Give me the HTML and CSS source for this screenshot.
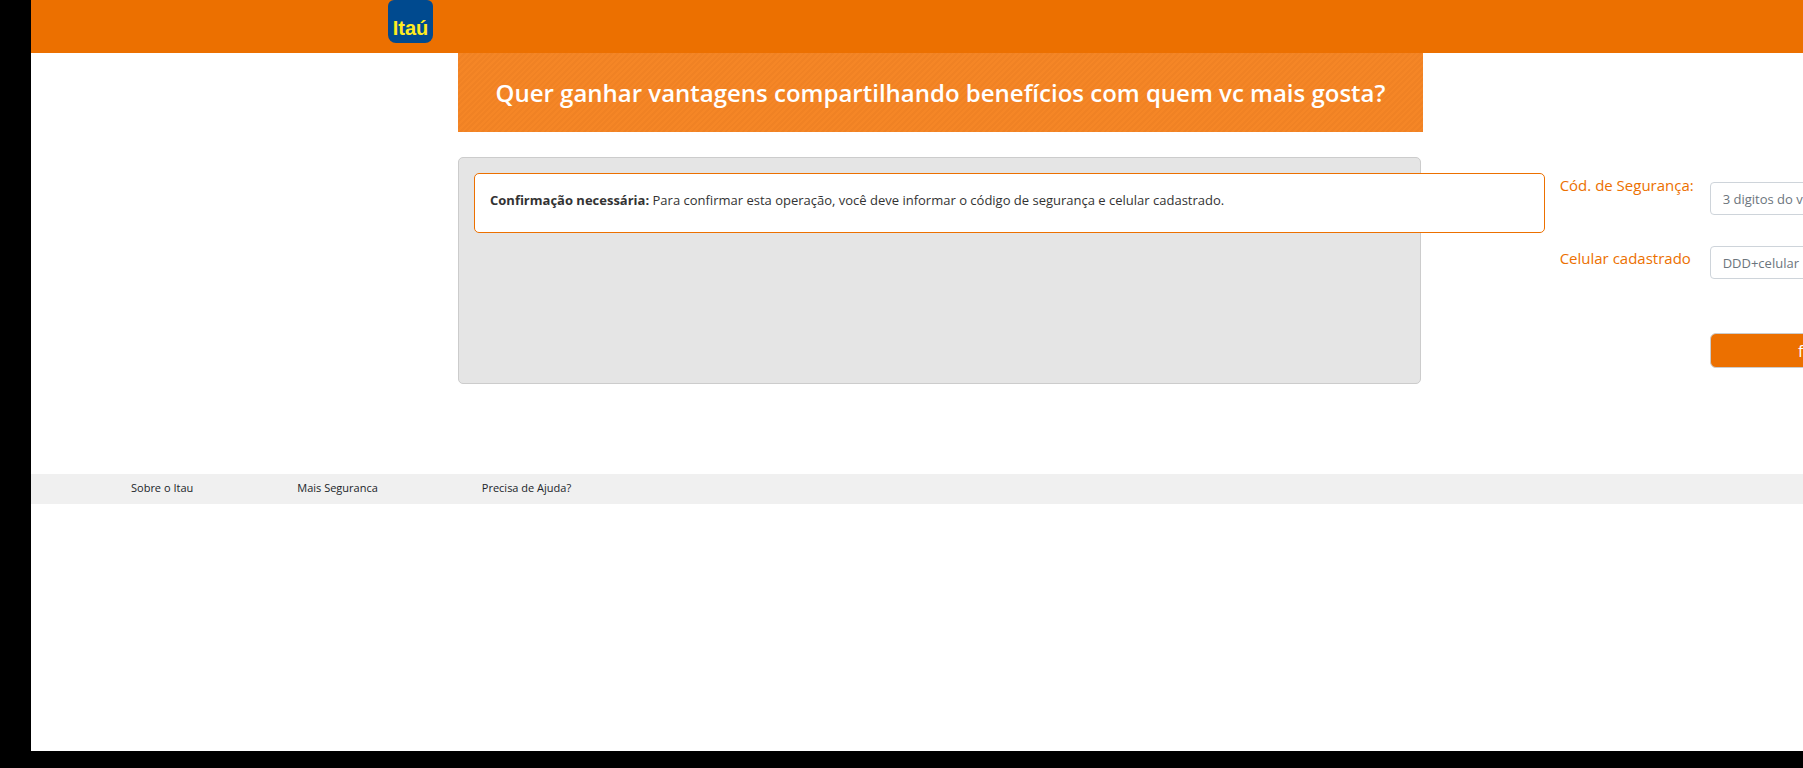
FILE: index.html
```html
<!DOCTYPE html>
<html lang="pt-BR">
<head>
<meta charset="utf-8">
<title>Itaú</title>
<link rel="stylesheet" href="styles.css">
</head>
<body>
<div class="page">
  <header class="topbar columns">
    <div class="logo">Itaú</div>
  </header>
  <main class="columns">
    <section class="content">
      <h1 class="banner">Quer ganhar vantagens compartilhando benefícios com quem vc mais gosta?</h1>
      <div class="panel">
        <p class="notice"><strong>Confirmação necessária:</strong> Para confirmar esta operação, você deve informar o código de segurança e celular cadastrado.</p>
        <form class="form">
          <label class="label" for="code">Cód. de Segurança:</label>
          <input class="field field-first" id="code" type="text" placeholder="3 digitos do verso do cartão">
          <label class="label" for="phone">Celular cadastrado</label>
          <input class="field" id="phone" type="tel" placeholder="DDD+celular">
          <button class="submit" type="button">finalizar</button>
        </form>
      </div>
    </section>
  </main>
  <footer class="footer">
    <a class="link" href="#">Sobre o Itau</a>
    <a class="link" href="#">Mais Seguranca</a>
    <a class="link" href="#">Precisa de Ajuda?</a>
  </footer>
</div>
</body>
</html>
```
FILE: styles.css
```css
* { box-sizing: border-box; }

body {
  margin: 0;
  background: #000;
  font-family: "Open Sans", "Noto Sans", sans-serif;
  overflow: hidden;
}

.page {
  min-height: calc(100vh - 17px);
  margin-left: 31px;
  background: #fff;
}

.columns {
  display: grid;
  grid-template-columns: 427fr minmax(0, 965fr) 380fr;
}

.topbar {
  height: 53px;
  background: #ec7000;
}

.logo {
  justify-self: end;
  display: flex;
  align-items: flex-end;
  justify-content: center;
  width: 45px;
  height: 43px;
  margin-right: 25px;
  padding-bottom: 3px;
  border-radius: 6px 6px 8px 8px;
  background: #004a8f;
  color: #ffec1f;
  font: bold 20px/24px "Liberation Sans", sans-serif;
}

.content { grid-column: 2; }

.banner {
  margin: 0 0 25px;
  padding: 24px 8px 23px;
  background: repeating-linear-gradient(135deg, #f08224 0 2px, #f58626 2px 4px);
  color: #fff;
  font-size: 24px;
  font-weight: 600;
  line-height: 32px;
  text-align: center;
  white-space: nowrap;
}

.panel {
  display: flex;
  align-items: flex-start;
  gap: 15px;
  min-height: 227px;
  margin-right: 2px;
  padding: 15px;
  border: 1px solid #ccc;
  border-radius: 5px;
  background: #e5e5e5;
}

.notice {
  flex: 0 0 115%;
  min-height: 60px;
  margin: 0;
  padding: 15px;
  border: 1px solid #ec7000;
  border-radius: 5px;
  background: #fff;
  color: #333;
  font-size: 13px;
  line-height: 22px;
}

.form {
  flex: none;
  display: grid;
  grid-template-columns: 150px 236px;
  grid-template-rows: 73px 64px auto;
}

.label {
  color: #ec7000;
  font-size: 15px;
  line-height: 24px;
  white-space: nowrap;
}

.field {
  height: 33px;
  padding: 0 12px;
  border: 1px solid #ced4da;
  border-radius: 4px;
  background: #fff;
  font: 13px/20px "Open Sans", "Noto Sans", sans-serif;
}

.field-first { margin-top: 9px; }

.field::placeholder { color: #6c757d; opacity: 1; }

.submit {
  grid-column: 2;
  height: 35px;
  margin-top: 23px;
  border: 1px solid #ccc;
  border-radius: 6px;
  background: #ec7000;
  color: #fff;
  font: 16px/24px "Open Sans", "Noto Sans", sans-serif;
}

.footer {
  display: flex;
  gap: 104px;
  margin-top: 90px;
  padding: 4px 100px 6px;
  background: #f0f0f0;
}

.link {
  color: #212529;
  font-size: 11px;
  line-height: 20px;
  text-decoration: none;
}
```
